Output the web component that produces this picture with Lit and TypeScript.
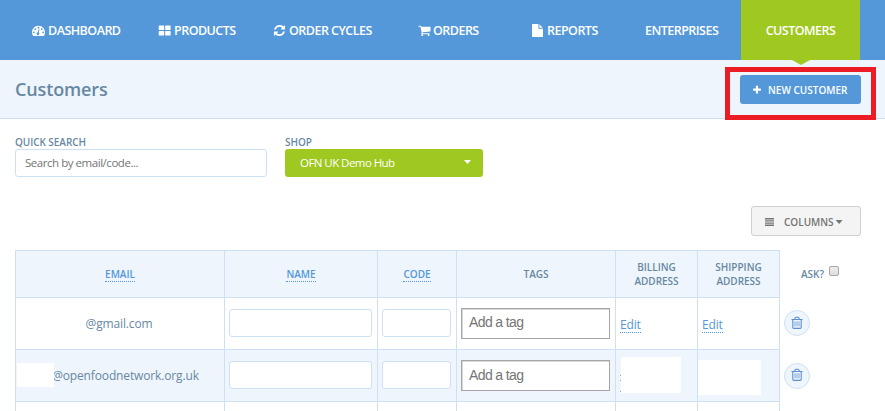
import { LitElement, html, css, svg } from "lit";
import { customElement } from "lit/decorators.js";

// Icon outlines on the 1792-unit grid, y axis pointing down.
const gauge = svg`<path fill-rule="evenodd" d="M896 256C400 256 0 656 0 1150c0 174 50 343 142 488 12 18 33 26 54 26h1400c21 0 42-8 54-26 92-145 142-314 142-488C1792 656 1392 256 896 256zM256 1024a128 128 0 1 1 0 256 128 128 0 0 1 0-256zM448 576a128 128 0 1 1 0 256 128 128 0 0 1 0-256zM896 384a128 128 0 1 1 0 256 128 128 0 0 1 0-256zM1344 576a128 128 0 1 1 0 256 128 128 0 0 1 0-256zM1536 1024a128 128 0 1 1 0 256 128 128 0 0 1 0-256zM988 721a64 64 0 0 1 46 78l-101 382c65 45 100 127 79 209a192 192 0 1 1-371-98c22-82 93-136 173-141l101-382c9-35 39-57 73-48z"/>`;
const tiles = svg`<path d="M180 200h590q80 0 80 80v480q0 80-80 80H180q-80 0-80-80V280q0-80 80-80zM1070 200h590q80 0 80 80v480q0 80-80 80h-590q-80 0-80-80V280q0-80 80-80zM180 960h590q80 0 80 80v480q0 80-80 80H180q-80 0-80-80v-480q0-80 80-80zM1070 960h590q80 0 80 80v480q0 80-80 80h-590q-80 0-80-80v-480q0-80 80-80z"/>`;
const refresh = svg`<path d="M1639 1056q0 5-1 7-64 268-268 434.500T892 1664q-146 0-282.500-55T366 1452l-129 129q-19 19-45 19t-45-19-19-45v-448q0-26 19-45t45-19h448q26 0 45 19t19 45-19 45l-137 137q71 66 161 102t187 36q134 0 250-65t186-179q11-17 53-117 8-23 30-23h192q13 0 22.500 9.500t9.500 22.500zm25-800v448q0 26-19 45t-45 19h-448q-26 0-45-19t-19-45 19-45l138-138Q1097 384 896 384q-134 0-250 65T460 628q-11 17-53 117-8 23-30 23H178q-13 0-22.500-9.500T146 736v-7q65-268 270-434.500T896 128q146 0 284 55.500T1425 340l130-129q19-19 45-19t45 19 19 45z"/>`;
const cart = svg`<path d="M704 1536q0 52-38 90t-90 38-90-38-38-90 38-90 90-38 90 38 38 90zm896 0q0 52-38 90t-90 38-90-38-38-90 38-90 90-38 90 38 38 90zm128-1088v512q0 24-16.500 42.500T1671 1024l-1044 122q13 60 13 70 0 16-24 64h920q26 0 45 19t19 45-19 45-45 19H512q-26 0-45-19t-19-45q0-11 8-31.500t16-36 21.500-40T509 1207L332 384H128q-26 0-45-19t-19-45 19-45 45-19h256q16 0 28.500 6.500T432 278t13 24.500 8 26 5.500 29.500 4.500 26h1201q26 0 45 19t19 45z"/>`;
const page = svg`<path d="M1024 512V40q22 14 36 28l408 408q14 14 28 36h-472zm-128 32q0 40 28 68t68 28h544v1056q0 40-28 68t-68 28H96q-40 0-68-28t-28-68V96q0-40 28-68T96 0h800v544z"/>`;
const plus = svg`<path d="M1600 736v192q0 40-28 68t-68 28h-416v416q0 40-28 68t-68 28H800q-40 0-68-28t-28-68v-416H288q-40 0-68-28t-28-68V736q0-40 28-68t68-28h416V224q0-40 28-68t68-28h192q40 0 68 28t28 68v416h416q40 0 68 28t28 68z"/>`;

@customElement("app-root")
export class AppRoot extends LitElement {
  static styles = css`
    :host {
      display: block;
      position: relative;
      width: 885px;
      height: 411px;
      overflow: hidden;
      background: #fff;
      color: #6788a2;
      font-family: "Open Sans", sans-serif;
      font-size: 12px;
      letter-spacing: -0.14px;
    }
    * { box-sizing: border-box; }
    nav {
      display: grid;
      grid-template-columns: 126px 115px 145px 114px 113px 96px 119px;
      padding-left: 32px;
      height: 60px;
      background: #5498da;
      color: #fff;
      font-size: 12.5px;
      font-weight: 600;
      letter-spacing: -0.52px;
    }
    .item {
      display: flex;
      align-items: center;
      white-space: nowrap;
      padding-top: 1px;
      line-height: 18px;
    }
    .item svg { width: 13px; height: 13px; fill: #fff; margin-right: 3px; flex: none; }
    .item .cart { margin-right: 2px; }
    .item .tall { width: 11px; margin-right: 4px; }
    .active {
      position: relative;
      justify-content: center;
      background: #9fc820;
    }
    .active::after {
      content: "";
      position: absolute;
      top: 60px;
      left: 51px;
      border: 9px solid transparent;
      border-top: 5px solid #9fc820;
      border-bottom: 0;
    }
    header {
      display: flex;
      justify-content: space-between;
      align-items: center;
      height: 59px;
      padding: 0 24px 0 15px;
      background: #eff5fc;
      border-bottom: 1px solid #cee1f4;
    }
    h1 { margin: 0; font-size: 18px; font-weight: 600; line-height: 24px; }
    .new {
      display: flex;
      align-items: center;
      width: 121px;
      height: 29px;
      padding: 2px 0 0 12px;
      border-radius: 3px;
      background: #5498da;
      color: #fff;
      font-size: 10px;
      font-weight: 600;
      letter-spacing: 0;
      white-space: nowrap;
    }
    .new svg { width: 10px; height: 10px; fill: #fff; margin-right: 6px; }
    .marker {
      position: absolute;
      left: 725px;
      top: 67px;
      width: 151px;
      height: 53px;
      border: 5px solid #eb1c24;
    }
    .filters { display: flex; gap: 18px; padding: 17px 15px 0; }
    .label { display: block; font-size: 10px; font-weight: 600; line-height: 13px; height: 13px; white-space: nowrap; letter-spacing: -0.05px; }
    .search {
      width: 252px;
      height: 28px;
      border: 1px solid #cee1f4;
      border-radius: 3px;
      padding-left: 9px;
      font-size: 11.5px;
      letter-spacing: -0.46px;
      line-height: 26px;
      color: #757575;
    }
    .select {
      display: flex;
      align-items: center;
      justify-content: space-between;
      width: 198px;
      height: 28px;
      padding: 0 12px 2px 15px;
      border-radius: 3px;
      background: #9fc820;
      color: #fff;
      font-size: 11.5px;
      letter-spacing: -0.55px;
    }
    .caret { width: 7px; height: 4px; background: currentColor; clip-path: polygon(0 0, 100% 0, 50% 100%); }
    .toolbar { display: flex; justify-content: flex-end; padding: 29px 24px 14px 0; }
    .columns {
      display: flex;
      align-items: center;
      width: 110px;
      height: 30px;
      padding: 2px 0 0 13px;
      border: 1px solid #cfcfcf;
      border-radius: 3px;
      background: #f4f4f4;
      color: #757575;
      font-size: 10px;
      font-weight: 600;
      letter-spacing: 0;
    }
    .columns svg { width: 9px; height: 8px; margin-right: 10px; fill: #757575; }
    .columns .caret { margin-left: 2px; }
    .row {
      display: grid;
      grid-template-columns: 209px 153px 79px 159px 82px 83px 90px;
      height: 52px;
      margin-left: 15px;
    }
    .row.head { height: 47px; font-size: 10px; font-weight: 600; text-align: center; line-height: 14px; letter-spacing: 0; }
    .cell {
      display: flex;
      align-items: center;
      justify-content: center;
      border-left: 1px solid #cee1f4;
      border-top: 1px solid #cee1f4;
      position: relative;
      white-space: nowrap;
    }
    .cell.last { border-right: 1px solid #cee1f4; }
    .head .cell, .alt .cell { background: #eff5fc; }
    .sort { color: #5498da; border-bottom: 1px dotted #5498da; line-height: 13px; padding-top: 1px; }
    .mail { padding-right: 2px; }
    .domain { padding-left: 11px; }
    .left { justify-content: flex-start; padding-left: 4px; }
    .inset { justify-content: flex-start; padding-left: 4px; }
    .field { height: 28px; background: #fff; border: 1px solid #cee1f4; border-radius: 3px; margin-bottom: 1px; }
    .name { width: 143px; }
    .code { width: 69px; }
    .tag {
      width: 149px;
      height: 31px;
      border: 1px solid #a6a6a6;
      box-shadow: inset 1px 1px #d8d8d8;
      background: #fff;
      color: #757575;
      padding-left: 7px;
      font: 14px/27px "Liberation Sans", sans-serif;
      letter-spacing: -0.62px;
    }
    .alt .tag { line-height: 29px; }
    .edit { color: #5498da; border-bottom: 1px dotted #5498da; line-height: 15px; padding-top: 1px; margin-top: 1px; }
    .side { display: flex; align-items: center; padding-left: 4px; }
    .ask { padding-left: 21px; }
    .box {
      width: 10px;
      height: 10px;
      margin: 0 0 5px 5px;
      border: 1px solid #a8a8a8;
      border-radius: 2px;
      background: linear-gradient(#eee, #ddd);
    }
    .trash {
      display: flex;
      align-items: center;
      justify-content: center;
      width: 26px;
      height: 26px;
      border: 1px solid #cee1f4;
      border-radius: 50%;
      background: #eff5fc;
    }
    .alt .trash { margin-top: 1px; }
    .trash svg { width: 12px; height: 14px; fill: none; stroke: #5b8fd0; margin-bottom: 1px; }
    .mask { position: absolute; background: #fff; }
    .m1 { left: 1px; top: 13px; width: 37px; height: 24px; }
    .m2 { left: 5px; top: 7px; width: 60px; height: 36px; }
    .m3 { left: 0; top: 10px; width: 63px; height: 35px; }
    .dots {
      position: absolute;
      left: 4px;
      top: 25px;
      width: 1px;
      height: 17px;
      background: linear-gradient(#8fa9bd 1px, transparent 1px 5px, #8fa9bd 5px 6px, transparent 6px 16px, #8fa9bd 16px);
    }
  `;

  private icon(shape: unknown, box = "0 0 1792 1792", cls = "") {
    return html`<svg class=${cls} viewBox=${box}>${shape}</svg>`;
  }

  private trash() {
    return html`<div class="side"><div class="trash"><svg viewBox="0 0 12 14">
      <path d="M.5 3.500h11M3.700 3.200l.5-1.500q.2-.5.700-.5h2.200q.5 0 .7.500l.5 1.500M1.800 3.500v7.700q0 1.200 1 1.200h6.400q1 0 1-1.200V3.500" stroke-width="1.100"/>
      <path d="M4 5.300v5M6 5.300v5M8 5.300v5" stroke-width="1" opacity=".75"/></svg></div></div>`;
  }

  render() {
    return html`
      <nav>
        <div class="item">${this.icon(gauge)}<span>DASHBOARD</span></div>
        <div class="item">${this.icon(tiles)}<span>PRODUCTS</span></div>
        <div class="item">${this.icon(refresh)}<span>ORDER CYCLES</span></div>
        <div class="item">${this.icon(cart, undefined, "cart")}<span>ORDERS</span></div>
        <div class="item">${this.icon(page, "0 0 1536 1792", "tall")}<span>REPORTS</span></div>
        <div class="item"><span>ENTERPRISES</span></div>
        <div class="item active"><span>CUSTOMERS</span></div>
      </nav>
      <header>
        <h1>Customers</h1>
        <div class="new">${this.icon(plus)}<span>NEW CUSTOMER</span></div>
      </header>
      <div class="filters">
        <div><span class="label">QUICK SEARCH</span><div class="search">Search by email/code...</div></div>
        <div><span class="label">SHOP</span><div class="select"><span>OFN UK Demo Hub</span><i class="caret"></i></div></div>
      </div>
      <div class="toolbar">
        <div class="columns">
          <svg viewBox="0 0 9 8"><path d="M0 0h9v1.400H0zM0 2.200h9v1.400H0zM0 4.400h9v1.400H0zM0 6.600h9V8H0z"/></svg>
          <span>COLUMNS</span><i class="caret"></i>
        </div>
      </div>
      <div class="row head">
        <div class="cell"><span class="sort">EMAIL</span></div>
        <div class="cell"><span class="sort">NAME</span></div>
        <div class="cell"><span class="sort">CODE</span></div>
        <div class="cell">TAGS</div>
        <div class="cell">BILLING<br />ADDRESS</div>
        <div class="cell last">SHIPPING<br />ADDRESS</div>
        <div class="side ask">ASK?<i class="box"></i></div>
      </div>
      <div class="row">
        <div class="cell mail"><span>@gmail.com</span></div>
        <div class="cell inset"><div class="field name"></div></div>
        <div class="cell inset"><div class="field code"></div></div>
        <div class="cell inset"><div class="tag">Add a tag</div></div>
        <div class="cell left"><span class="edit">Edit</span></div>
        <div class="cell left last"><span class="edit">Edit</span></div>
        ${this.trash()}
      </div>
      <div class="row alt">
        <div class="cell domain"><i class="mask m1"></i><span>@openfoodnetwork.org.uk</span></div>
        <div class="cell inset"><div class="field name"></div></div>
        <div class="cell inset"><div class="field code"></div></div>
        <div class="cell inset"><div class="tag">Add a tag</div></div>
        <div class="cell"><i class="dots"></i><i class="mask m2"></i></div>
        <div class="cell last"><i class="mask m3"></i></div>
        ${this.trash()}
      </div>
      <div class="row">
        <div class="cell"></div><div class="cell"></div><div class="cell"></div>
        <div class="cell"></div><div class="cell"></div><div class="cell last"></div>
      </div>
      <div class="marker"></div>
    `;
  }
}
